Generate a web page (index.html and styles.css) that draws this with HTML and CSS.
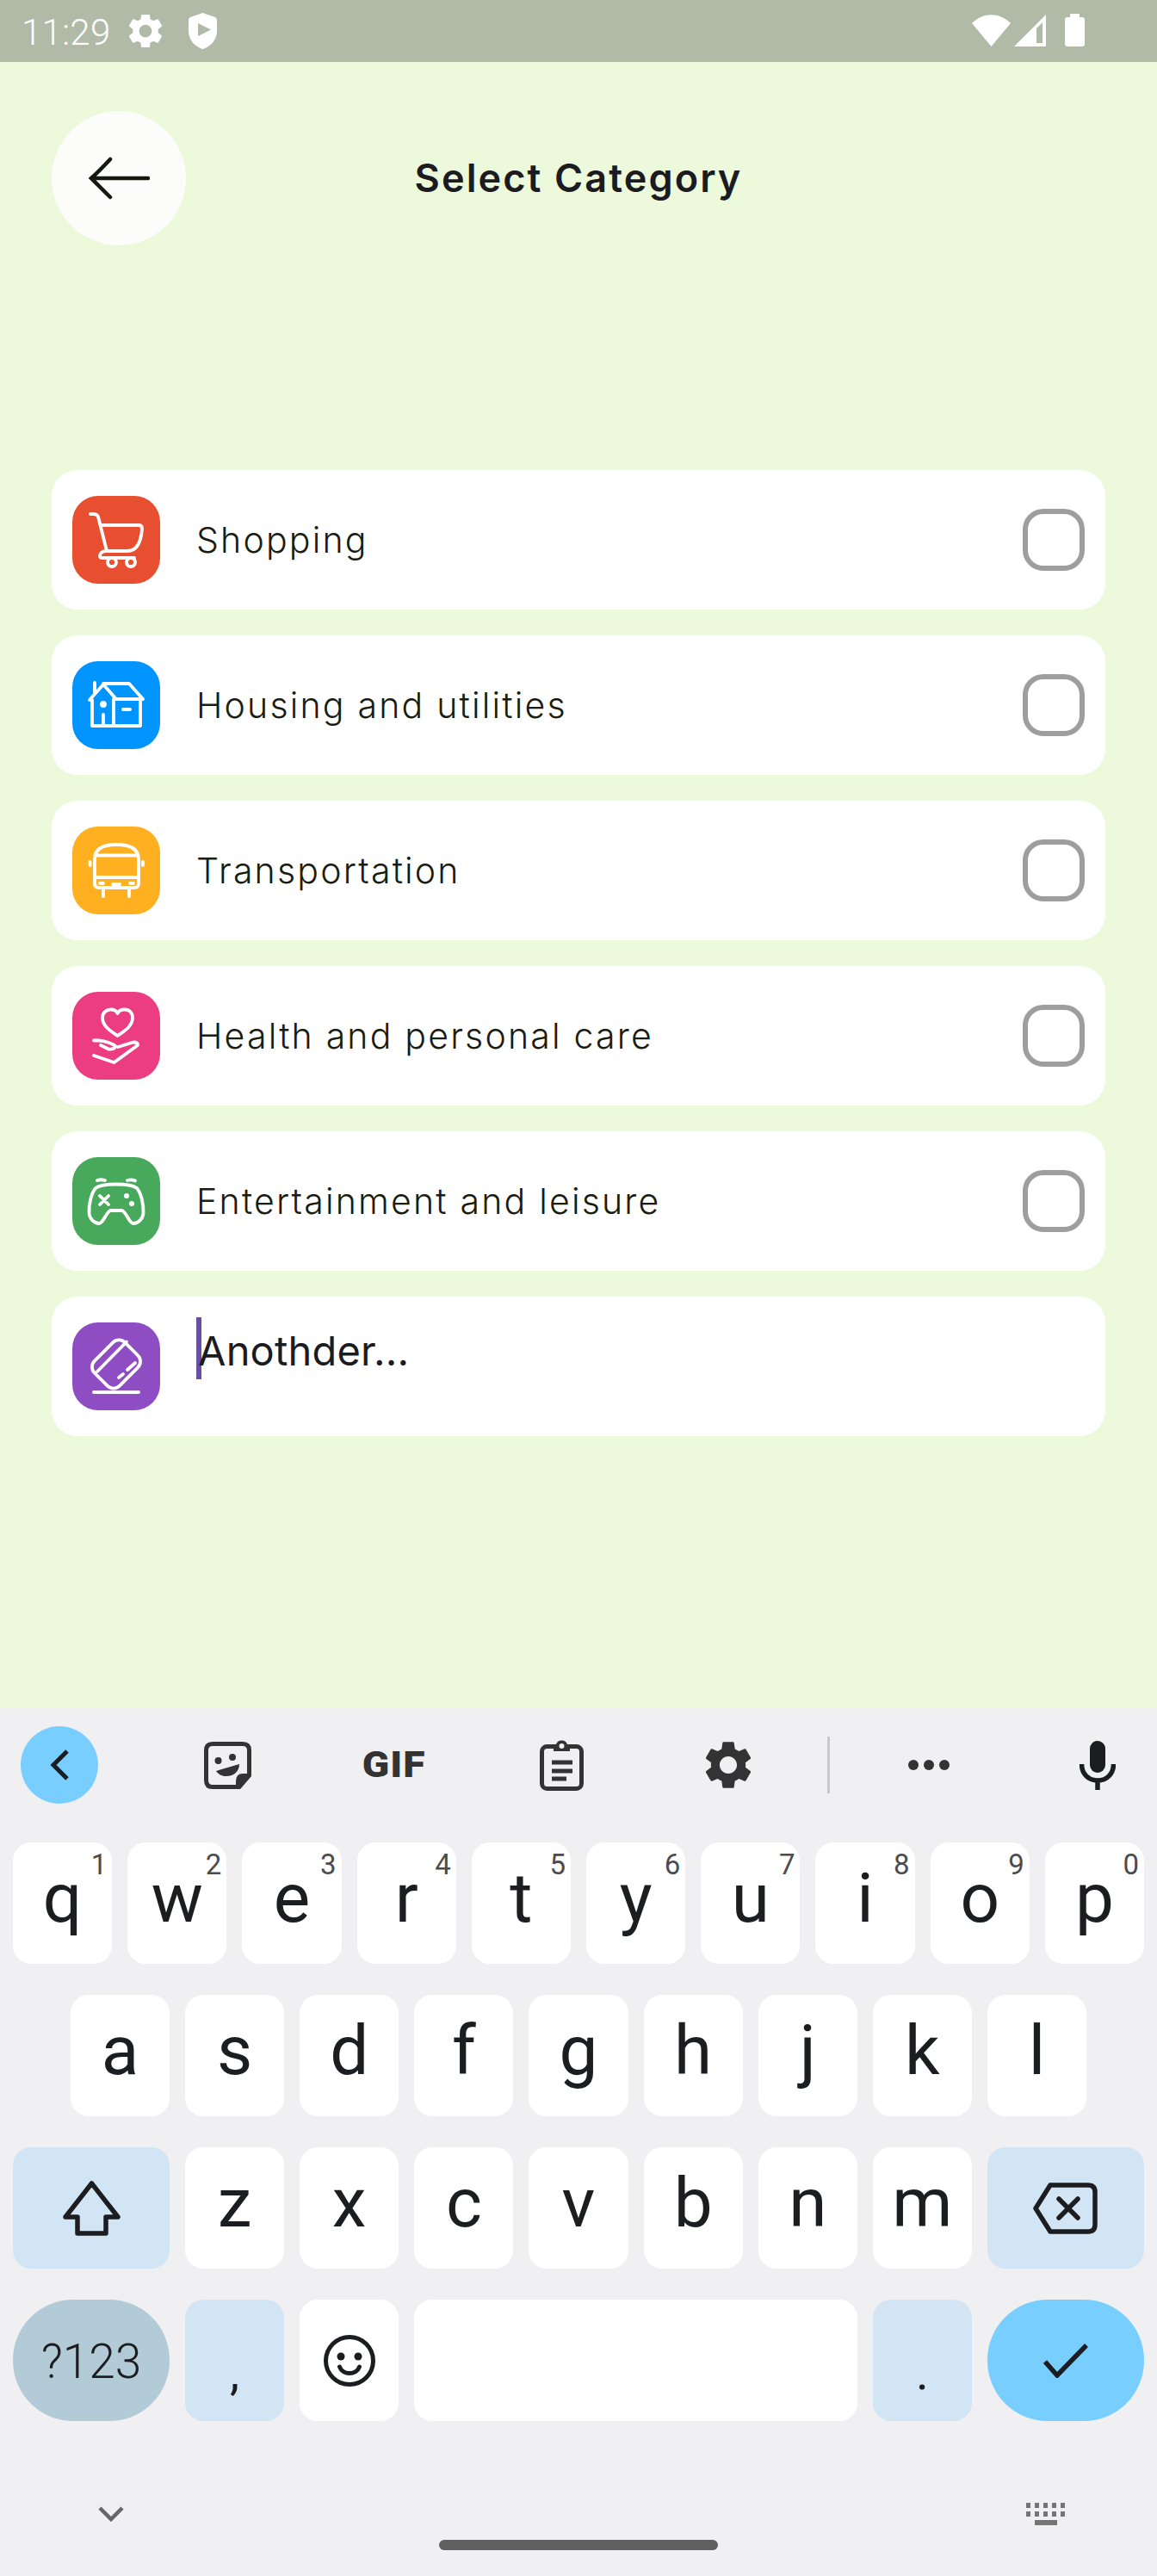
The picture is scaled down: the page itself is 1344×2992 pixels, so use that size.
FILE: index.html
```html
<!DOCTYPE html>
<html lang="en">
<head>
<meta charset="utf-8">
<title>Select Category</title>
<link rel="stylesheet" href="styles.css">
</head>
<body>
<div class="screen">
  <div class="status">
    <span class="time">11:29</span>
    <svg class="st-gear" viewBox="2.7 2.7 18.6 18.6"><path fill="#fff" d="M19.14 12.94c.04-.3.06-.61.06-.94 0-.32-.02-.64-.07-.94l2.03-1.58c.18-.14.23-.41.12-.61l-1.92-3.32c-.12-.22-.37-.29-.59-.22l-2.39.96c-.5-.38-1.03-.7-1.62-.94l-.36-2.54c-.04-.24-.24-.41-.48-.41h-3.84c-.24 0-.43.17-.47.41l-.36 2.54c-.59.24-1.13.57-1.62.94l-2.39-.96c-.22-.08-.47 0-.59.22L2.74 8.87c-.12.21-.08.47.12.61l2.03 1.58c-.05.3-.09.63-.09.94s.02.64.07.94l-2.03 1.58c-.18.14-.23.41-.12.61l1.92 3.32c.12.22.37.29.59.22l2.39-.96c.5.38 1.03.7 1.62.94l.36 2.54c.05.24.24.41.48.41h3.84c.24 0 .44-.17.47-.41l.36-2.54c.59-.24 1.13-.56 1.62-.94l2.39.96c.22.08.47 0 .59-.22l1.92-3.32c.12-.22.07-.47-.12-.61l-2.01-1.58zM12 15.6c-1.98 0-3.6-1.62-3.6-3.6s1.62-3.6 3.6-3.6 3.6 1.62 3.6 3.6-1.62 3.6-3.6 3.6z"/></svg>
    <svg class="st-shield" viewBox="0 0 33 42"><path fill="#fff" fill-rule="evenodd" d="M16.5 0 L31 5 Q33 6 33 8 V21 C33 31 26 39 16.5 42 C7 39 0 31 0 21 V8 Q0 6 2 5 Z M11 12 V27 L26 19.5 Z"/></svg>
    <span class="st-spacer"></span>
    <svg class="st-wifi" viewBox="0 0 45 37"><path fill="#fff" d="M0 10 C13 -3 32 -3 45 10 L22.5 37 Z"/></svg>
    <svg class="st-signal" viewBox="0 0 37 37"><path fill="#fff" fill-rule="evenodd" d="M0 37 L37 0 V37 Z M26 33 H33 V9 L26 16 Z"/></svg>
    <svg class="st-battery" viewBox="0 0 23 38"><path fill="#fff" d="M6 0 H17 V4 H20 Q23 4 23 7 V35 Q23 38 20 38 H3 Q0 38 0 35 V7 Q0 4 3 4 H6 Z"/></svg>
  </div>

  <main class="main">
    <header class="header">
      <button class="back">
        <svg class="back-icon" viewBox="0 0 72 50"><path d="M70 25 H4 M26 3 Q12 18 4 25 Q12 33 26 47" fill="none" stroke="#15180c" stroke-width="4.5" stroke-linecap="round"/></svg>
      </button>
      <h1 class="title">Select Category</h1>
    </header>

    <div class="list">
      <div class="card">
        <span class="icon red">
          <svg viewBox="0 0 102 102" class="glyph"><path d="M21 21 H25 Q29.500 21 30.500 26 L40 64 M33 34 H77 Q81 34 81 38 C80 52 76 64 64 64 H40 C34 64 32 67 32 70 Q32 72 35 72 H72"/><circle cx="46" cy="77" r="5"/><circle cx="68" cy="77" r="5"/></svg>
        </span>
        <span class="label">Shopping</span>
        <span class="check"></span>
      </div>
      <div class="card">
        <span class="icon blue">
          <svg viewBox="0 0 102 102" class="glyph"><path d="M20 45 L36 27 L51 44 H82 L66 26 H36 M26 25 V36 M23 45 V75 H79 V45 M48 44 V75 M36 62 V75 M59 56 H67"/><circle cx="36" cy="50" r="2" /></svg>
        </span>
        <span class="label">Housing and utilities</span>
        <span class="check"></span>
      </div>
      <div class="card">
        <span class="icon yellow">
          <svg viewBox="0 0 102 102" class="glyph"><path d="M26 38 Q26 21 51 21 Q77 21 77 38 V66 Q77 71 72 71 H31 Q26 71 26 66 Z M27 33.500 H76 M27 59 H76 M32 66 H36 M67 66 H71 M47 67 H55 M36 72 V81 M66 72 V81 M20.500 41 V45 M82 41 V45"/></svg>
        </span>
        <span class="label">Transportation</span>
        <span class="check"></span>
      </div>
      <div class="card">
        <span class="icon pink">
          <svg viewBox="0 0 102 102" class="glyph"><path d="M52.500 51 C45 46 35 40 35 30 C35 24 40 20.500 45 20.500 C48.500 20.500 51 22 52.500 25 C54 22 57 20.500 60.500 20.500 C66 20.500 70 24 70 30 C70 40 60 46 52.500 51 Z M25 56.500 H30 C38 56.500 48 61 50 63 C50 66 46 67 42 66.500 L33 62 M53 64 L71 58.500 Q76 58.500 76 62 L48.500 82 L25 74"/></svg>
        </span>
        <span class="label">Health and personal care</span>
        <span class="check"></span>
      </div>
      <div class="card">
        <span class="icon green">
          <svg viewBox="0 0 102 102" class="glyph"><path d="M29 27 Q33 25.500 38 27 M64 27 Q69 25.500 73 27.500 M51 31.500 C40 31.500 32 32 27 36 C22 42 19 55 19.500 65 C20 72 26 77 31 77 C36 77 38 66 44 62 H58 C64 66 66 77 71 77 C76 77 82 72 82.500 65 C83 55 80 42 75 36 C70 32 62 31.500 51 31.500 Z M32 45 L42 55 M42 45 L32 55"/><circle class="dot" cx="63" cy="45" r="3"/><circle class="dot" cx="69" cy="54" r="3"/></svg>
        </span>
        <span class="label">Entertainment and leisure</span>
        <span class="check"></span>
      </div>
      <div class="card">
        <span class="icon purple">
          <svg viewBox="0 0 102 102" class="glyph"><rect x="26" y="28" width="50" height="41" rx="10" transform="rotate(-45 51 48.500)"/><path d="M29 57 L63 22.500 M54 64 L59 60 M64 55 L73 47 M25 81 H77"/></svg>
        </span>
        <div class="input"><span class="caret"></span><span class="input-text">Anothder...</span></div>
      </div>
    </div>
  </main>

  <section class="keyboard">
    <div class="toolbar">
      <span class="tb-back">
        <svg class="i-chev" viewBox="0 0 22 36"><path d="M20 2 L4 18 L20 34" fill="none" stroke="#1b1d20" stroke-width="5"/></svg>
      </span>
      <span class="tb-item">
        <svg class="i-sticker" viewBox="0 0 55 55"><path fill="none" stroke="#333" stroke-width="5" d="M41 52.500 H10 Q2.500 52.500 2.500 45 V10 Q2.500 2.500 10 2.500 H45 Q52.500 2.500 52.500 10 V39 Z"/><path fill="#333" d="M53 37 H45 Q37 37 37 46 V54 H41 L54 39 Z"/><circle cx="16.500" cy="22" r="4" fill="#333"/><circle cx="33" cy="18" r="4" fill="#333"/><path fill="#333" d="M14 34 L41 26 C41 34 35 40 26 40 C20 40 16 37 14 34 Z"/></svg>
      </span>
      <span class="tb-item"><span class="gif">GIF</span></span>
      <span class="tb-item">
        <svg class="i-clip" viewBox="0 0 51 60"><rect x="2.500" y="8.500" width="46" height="49" rx="6" fill="none" stroke="#333" stroke-width="5"/><path fill="#333" d="M16 6 H19 A7 7 0 0 1 32 6 H35 V14 H16 Z"/><circle cx="25.500" cy="8" r="3" fill="#f0f0f2"/><path stroke="#333" stroke-width="5" d="M14 27 H38 M14 37 H38 M14 46 H31"/></svg>
      </span>
      <span class="tb-item">
        <svg class="i-gear" viewBox="2.7 2.7 18.6 18.6"><path fill="#333" d="M19.14 12.94c.04-.3.06-.61.06-.94 0-.32-.02-.64-.07-.94l2.03-1.58c.18-.14.23-.41.12-.61l-1.92-3.32c-.12-.22-.37-.29-.59-.22l-2.39.96c-.5-.38-1.03-.7-1.62-.94l-.36-2.54c-.04-.24-.24-.41-.48-.41h-3.84c-.24 0-.43.17-.47.41l-.36 2.54c-.59.24-1.13.57-1.62.94l-2.39-.96c-.22-.08-.47 0-.59.22L2.74 8.87c-.12.21-.08.47.12.61l2.03 1.58c-.05.3-.09.63-.09.94s.02.64.07.94l-2.03 1.58c-.18.14-.23.41-.12.61l1.92 3.32c.12.22.37.29.59.22l2.39-.96c.5.38 1.03.7 1.62.94l.36 2.54c.05.24.24.41.48.41h3.84c.24 0 .44-.17.47-.41l.36-2.54c.59-.24 1.13-.56 1.62-.94l2.39.96c.22.08.47 0 .59-.22l1.92-3.32c.12-.22.07-.47-.12-.61l-2.01-1.58zM12 15.6c-1.98 0-3.6-1.62-3.6-3.6s1.62-3.6 3.6-3.6 3.6 1.62 3.6 3.6-1.62 3.6-3.6 3.6z"/></svg>
      </span>
      <span class="tb-div"></span>
      <span class="tb-narrow">
        <svg class="i-dots" viewBox="0 0 48 16"><circle cx="6" cy="8" r="6" fill="#333"/><circle cx="24" cy="8" r="6" fill="#333"/><circle cx="42" cy="8" r="6" fill="#333"/></svg>
      </span>
      <span class="tb-narrow tb-mic">
        <svg class="i-mic" viewBox="0 0 42 57"><rect x="12" y="0" width="18" height="37" rx="9" fill="#1b1d20"/><path d="M2.500 27 C2.500 38 10 46 21 46 C32 46 39.500 38 39.500 27 M21 46 V57" fill="none" stroke="#1b1d20" stroke-width="5.500"/></svg>
      </span>
    </div>

    <div class="keys">
      <div class="row">
        <span class="key">q<sup class="num">1</sup></span>
        <span class="key">w<sup class="num">2</sup></span>
        <span class="key">e<sup class="num">3</sup></span>
        <span class="key">r<sup class="num">4</sup></span>
        <span class="key">t<sup class="num">5</sup></span>
        <span class="key">y<sup class="num">6</sup></span>
        <span class="key">u<sup class="num">7</sup></span>
        <span class="key">i<sup class="num">8</sup></span>
        <span class="key">o<sup class="num">9</sup></span>
        <span class="key">p<sup class="num">0</sup></span>
      </div>
      <div class="row row-home">
        <span class="key">a</span><span class="key">s</span><span class="key">d</span><span class="key">f</span><span class="key">g</span><span class="key">h</span><span class="key">j</span><span class="key">k</span><span class="key">l</span>
      </div>
      <div class="row">
        <span class="key wide mod">
          <svg class="i-shift" viewBox="0 0 67 64"><path d="M33.500 3 L64 42 H50 V61 H17 V42 H3 Z" fill="none" stroke="#1b1d20" stroke-width="5.500" stroke-linejoin="round"/></svg>
        </span>
        <span class="key">z</span><span class="key">x</span><span class="key">c</span><span class="key">v</span><span class="key">b</span><span class="key">n</span><span class="key">m</span>
        <span class="key wide mod">
          <svg class="i-del" viewBox="0 0 75 60"><path d="M20 3 H64 Q72 3 72 11 V49 Q72 57 64 57 H20 L3 30 Z" fill="none" stroke="#1b1d20" stroke-width="5.500" stroke-linejoin="round"/><path d="M30 19 L52 41 M52 19 L30 41" stroke="#1b1d20" stroke-width="5.500" stroke-linecap="round"/></svg>
        </span>
      </div>
      <div class="row">
        <span class="key wide pill sym">?123</span>
        <span class="key mod punct">,</span>
        <span class="key">
          <svg class="i-emoji" viewBox="0 0 60 60"><circle cx="30" cy="30" r="27.500" fill="none" stroke="#1b1d20" stroke-width="5"/><circle cx="20" cy="25" r="4.500" fill="#1b1d20"/><circle cx="40" cy="25" r="4.500" fill="#1b1d20"/><path d="M18.500 37 C22 47 38 47 41.500 37" fill="none" stroke="#1b1d20" stroke-width="5" stroke-linecap="round"/></svg>
        </span>
        <span class="key space"></span>
        <span class="key mod punct">.</span>
        <span class="key wide pill action">
          <svg class="i-check" viewBox="0 0 52 40"><path d="M2 21 L16 37 L50 2" fill="none" stroke="#1b1d20" stroke-width="5.500"/></svg>
        </span>
      </div>
    </div>

    <div class="kb-nav">
      <svg class="i-down" viewBox="0 0 30 18"><path d="M2 2 L15 15 L28 2" fill="none" stroke="#666" stroke-width="4.500"/></svg>
      <svg class="i-kbd" viewBox="0 0 46 26"><g fill="#757575"><rect x="0" y="0" width="5" height="6"/><rect x="10" y="0" width="5" height="6"/><rect x="20" y="0" width="5" height="6"/><rect x="30" y="0" width="5" height="6"/><rect x="40" y="0" width="5" height="6"/><rect x="0" y="10" width="5" height="6"/><rect x="10" y="10" width="5" height="6"/><rect x="20" y="10" width="5" height="6"/><rect x="30" y="10" width="5" height="6"/><rect x="40" y="10" width="5" height="6"/><rect x="10" y="20" width="26" height="6"/></g></svg>
    </div>
    <div class="home-bar"></div>
  </section>
</div>
</body>
</html>
```
FILE: styles.css
```css
* { box-sizing: border-box; }
html, body { margin: 0; padding: 0; }
body { width: 1344px; height: 2992px; overflow: hidden; font-family: "Inter", "Liberation Sans", sans-serif; }
.screen { width: 1344px; height: 2992px; display: flex; flex-direction: column; background: #ecf9db; }

/* status bar */
.status { height: 72px; background: #b1baa6; display: flex; align-items: flex-start; padding-left: 25px; flex: none; }
.time { font: 300 42px/46px "Roboto", sans-serif; letter-spacing: .3px; color: #fff; margin-top: 15px; width: 125px; }
.st-gear { width: 38px; height: 38px; margin-top: 17px; }
.st-shield { width: 33px; height: 42px; margin-top: 15px; margin-left: 31px; }
.st-spacer { flex: 1; }
.st-wifi { width: 45px; height: 37px; margin-top: 17px; margin-right: 4px; }
.st-signal { width: 37px; height: 37px; margin-top: 17px; margin-right: 22px; }
.st-battery { width: 23px; height: 38px; margin-top: 16px; margin-right: 84px; }

/* main */
.main { height: 1912px; flex: none; padding: 57px 60px 0; }
.header { display: grid; grid-template-columns: 156px 1fr 156px; align-items: center; height: 156px; }
.back { width: 156px; height: 156px; border: 0; border-radius: 50%; background: #fcfcfa; padding: 0; display: flex; align-items: center; justify-content: center; }
.back-icon { width: 72px; height: 50px; }
.title { margin: 0; font: 600 45px/56px "Inter", sans-serif; letter-spacing: 2.1px; color: #1c1b1f; text-align: center; }
.list { margin-top: 261px; display: flex; flex-direction: column; gap: 30px; }
.card { height: 162px; background: #fff; border-radius: 30px; padding: 0 24px; display: flex; align-items: center; }
.icon { width: 102px; height: 102px; border-radius: 30px; flex: none; display: block; }
.red { background: #e84f30; }
.blue { background: #0094ff; }
.yellow { background: #ffb020; }
.pink { background: #ec3d83; }
.green { background: #48a85c; }
.purple { background: #8f4dc3; }
.glyph { display: block; width: 102px; height: 102px; fill: none; stroke: #fff; stroke-width: 3.8; stroke-linecap: round; stroke-linejoin: round; }
.glyph .dot { fill: #fff; stroke: none; }
.label { margin-left: 42px; flex: 1; font: 300 41px/56px "Inter", sans-serif; letter-spacing: 2.2px; color: #1a1c10; }
.check { width: 72px; height: 72px; flex: none; border: 6px solid #9e9e9e; border-radius: 24px; }
.input { align-self: flex-start; margin: 24px 0 0 42px; display: flex; }
.caret { width: 6px; height: 72px; background: #6750a4; flex: none; }
.input-text { margin-left: -4px; padding-top: 3px; font: 400 47px/72px "Inter", sans-serif; letter-spacing: .2px; color: #1c1b1f; }

/* keyboard */
.keyboard { flex: 1; background: #f0f0f2; padding-top: 21px; }
.toolbar { height: 90px; display: flex; align-items: center; padding-left: 24px; }
.tb-back { width: 90px; height: 90px; border-radius: 50%; background: #78cfff; display: flex; align-items: center; justify-content: center; margin-right: 53px; }
.tb-item { width: 194px; height: 90px; display: flex; align-items: center; justify-content: center; }
.tb-div { width: 3px; height: 66px; background: #c8c9cb; margin-left: 18px; margin-right: 50px; }
.tb-narrow { width: 130px; height: 90px; display: flex; align-items: center; justify-content: center; }
.tb-mic { margin-left: 66px; }
.i-chev { width: 22px; height: 36px; margin-left: -1px; }
.i-sticker { width: 55px; height: 55px; }
.gif { font: 900 42px/1 "Roboto", sans-serif; letter-spacing: 1px; color: #333; transform: scaleX(1.1); }
.i-clip { width: 51px; height: 60px; }
.i-gear { width: 52px; height: 54px; }
.i-dots { width: 48px; height: 16px; }
.i-mic { width: 42px; height: 57px; }

.keys { margin-top: 45px; display: flex; flex-direction: column; gap: 36px; }
.row { display: flex; gap: 18px; padding: 0 15px; height: 141px; }
.row-home { padding: 0 82px; }
.key { flex: 1 1 0; position: relative; height: 141px; background: #fff; border-radius: 21px; display: flex; align-items: flex-start; justify-content: center; font: 400 80px/130px "Roboto", sans-serif; color: #1b1d20; }
.key svg { align-self: center; }
.wide { flex: 0 0 182px; }
.mod { background: #d2e5f4; }
.pill { border-radius: 70px; }
.sym { background: #b3cad7; font-size: 55px; font-weight: 300; line-height: 144px; }
.action { background: #78cfff; }
.space { flex: 0 0 515px; }
.punct { font-size: 56px; line-height: 170px; }
.num { position: absolute; top: 6px; right: 6px; font: 400 33px/40px "Roboto", sans-serif; color: #4a4c50; }
.i-shift { width: 67px; height: 64px; }
.i-del { width: 75px; height: 60px; }
.i-emoji { width: 60px; height: 60px; }
.i-check { width: 52px; height: 40px; }

.kb-nav { margin-top: 95px; height: 26px; display: flex; align-items: center; justify-content: space-between; padding: 0 106px 0 114px; }
.i-down { width: 30px; height: 18px; }
.i-kbd { width: 46px; height: 26px; }
.home-bar { width: 324px; height: 12px; margin: 17px auto 0; border-radius: 6px; background: #5f5f5f; }
```
